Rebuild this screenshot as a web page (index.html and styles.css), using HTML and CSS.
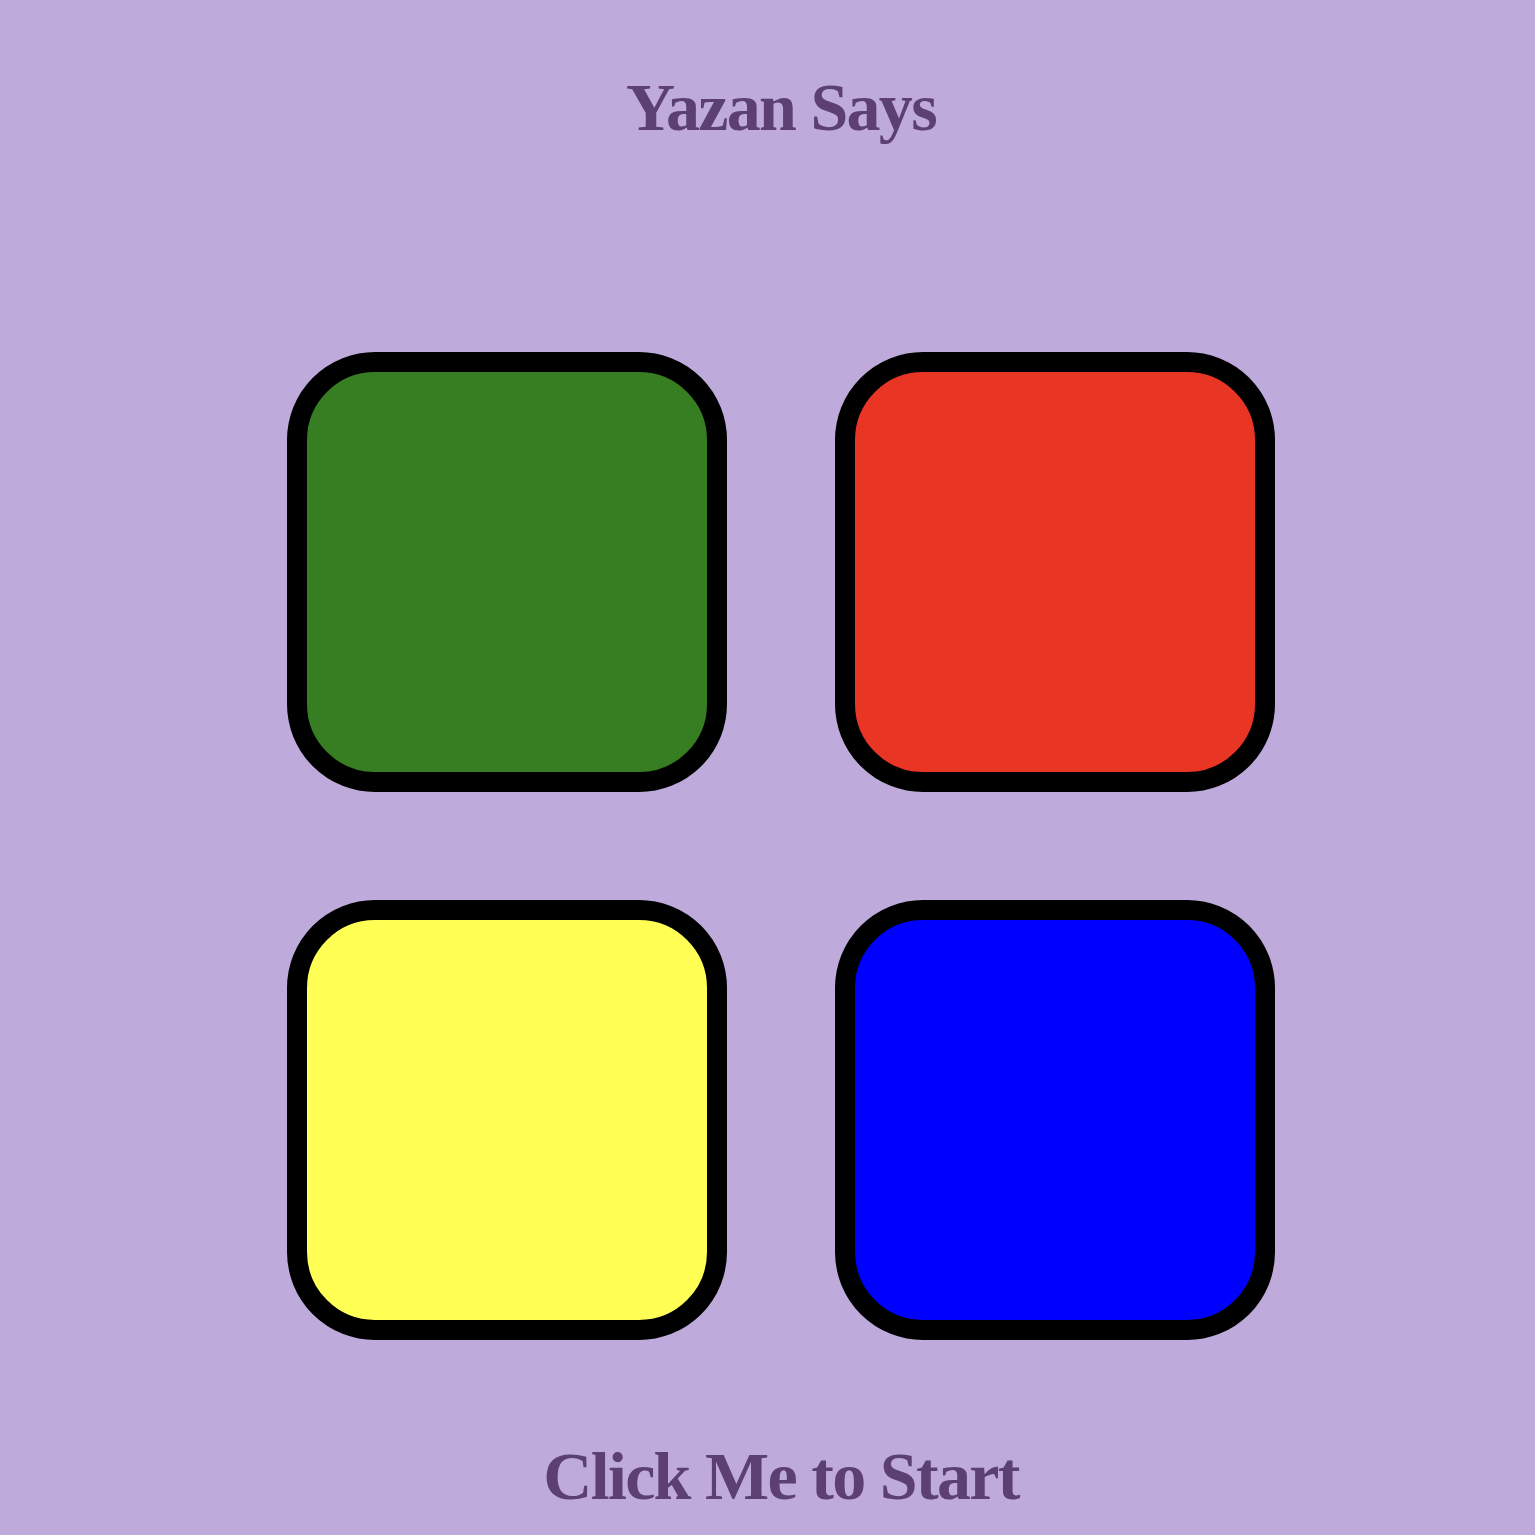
FILE: index.html
```html
<!DOCTYPE html>
<html lang="en">
<head>
<meta charset="utf-8">
<title>Yazan Says</title>
<link rel="stylesheet" href="styles.css">
</head>
<body>
<main class="game">
  <h1 class="title">Yazan Says</h1>
  <div class="board">
    <div class="pad pad-green"></div>
    <div class="pad pad-red"></div>
    <div class="pad pad-yellow"></div>
    <div class="pad pad-blue"></div>
  </div>
  <h2 class="start">Click Me to Start</h2>
</main>
</body>
</html>
```
FILE: styles.css
```css
html, body {
  margin: 0;
  padding: 0;
  background: #bfabdb;
}
.game {
  display: flex;
  flex-direction: column;
  align-items: center;
  padding-left: 27px;
  font-family: "Liberation Serif", "Times New Roman", serif;
  color: #5c3f73;
}
.title {
  margin: 73px 0 0;
  font-size: 68px;
  line-height: 1;
  font-weight: bold;
  letter-spacing: -1.7px;
}
.board {
  display: grid;
  grid-template-columns: 440px 440px;
  grid-auto-rows: 440px;
  column-gap: 108px;
  row-gap: 108px;
  margin-top: 211px;
}
.pad {
  box-sizing: border-box;
  border: 20px solid #000;
  border-radius: 88px;
}
.pad-green { background: #377d22; }
.pad-red { background: #e83524; }
.pad-yellow { background: #ffff55; }
.pad-blue { background: #0000ff; }
.start {
  margin: 102px 0 0;
  font-size: 68px;
  line-height: 1;
  font-weight: bold;
  letter-spacing: -1.7px;
}
```
